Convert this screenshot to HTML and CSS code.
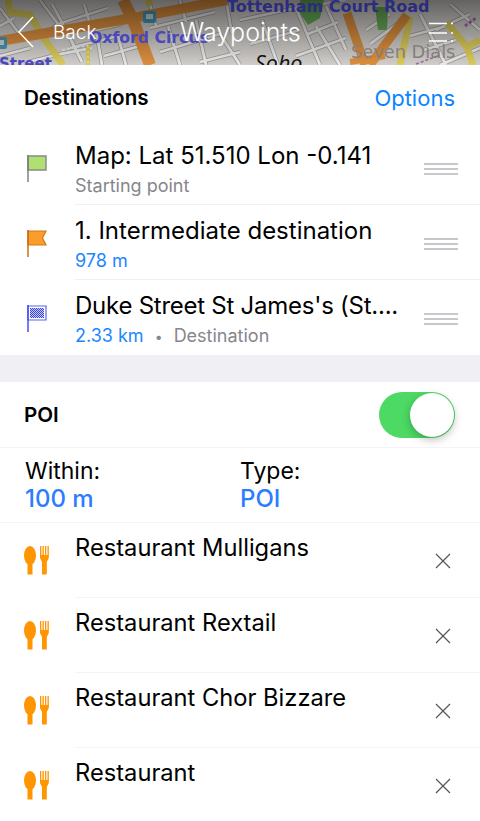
FILE: index.html
```html
<!DOCTYPE html>
<html lang="en">
<head>
    <meta charset="UTF-8">
    <meta name="viewport" content="width=device-width, initial-scale=1.0">
    <title>Waypoints</title>
    <link rel="stylesheet" href="styles.css">
</head>
<body>
    <header class="topbar">
        <svg class="map" viewBox="0 0 480 65" width="480" height="65">
            <defs>
                <linearGradient id="shade" x1="0" y1="0" x2="0" y2="1">
                    <stop offset="0" stop-color="#000" stop-opacity="0.56"/>
                    <stop offset="0.6" stop-color="#000" stop-opacity="0.28"/>
                    <stop offset="1" stop-color="#000" stop-opacity="0.08"/>
                </linearGradient>
                <g id="streets">
                    <path d="M0 8 L24 40 M0 26 L14 18 M40 0 L58 24 L44 36 M58 24 L108 8 M52 4 L66 30 L90 24 L84 4 M66 30 L82 62 M96 30 L122 24 M92 48 L60 54 L28 62 M96 30 L102 65"/>
                    <path d="M30 48 L0 56 M70 48 L118 36 L126 65 M104 56 L140 46 M150 28 L215 12 M160 52 L220 34 L240 65 M168 26 L180 65 M196 20 L206 65 M150 4 L156 26 M180 0 L186 22 M200 62 L240 52 M226 0 L232 34"/>
                    <path d="M240 20 L296 8 L320 65 M250 44 L300 30 M262 20 L278 65 M296 56 L346 38 M316 26 L340 65 M326 6 L346 50 M338 22 L308 34 M296 8 L346 0"/>
                    <path d="M370 44 L400 22 M366 30 L390 14 M420 14 L446 65 M410 36 L446 26 M436 30 L470 14 M450 4 L480 30 M424 50 L456 40 M440 65 L480 48"/>
                </g>
            </defs>
            <g class="map-base">
                <rect width="480" height="65" fill="#e2dfdb"/>
                <!-- small streets, casing first -->
                <use href="#streets" fill="none" stroke="#a9a5a1" stroke-width="4.200"/>
                <use href="#streets" fill="none" stroke="#fff" stroke-width="2.800"/>
                <!-- parks -->
                <path d="M300 0 H324 L320 18 L308 25 L300 13 Z" fill="#6fbb5e"/>
                <path d="M375 7 H388 L387 30 H378 Z" fill="#6fbb5e"/>
                <!-- main roads -->
                <g fill="none">
                    <path d="M8 0 L10 12 L30 15 L43 37 L63 65" stroke="#ecdc62" stroke-width="7"/>
                    <path d="M410 17 L400 65" stroke="#ecdc62" stroke-width="7"/>
                    <path d="M447 23 L467 47 L480 40 M467 47 L473 65" stroke="#ecdc62" stroke-width="7"/>
                    <path d="M148 0 L150 6" stroke="#ecdc62" stroke-width="7"/>
                    <path d="M88 44 V65" stroke="#ecdc62" stroke-width="4"/>
                    <path d="M88 46 V65" stroke="#fff" stroke-width="1" stroke-dasharray="2 3"/>
                    <path d="M62 50 L88 45" stroke="#fff" stroke-width="2" stroke-dasharray="3 2"/>
                    <path d="M0 41 L133 18 L227 0" stroke="#ee9a43" stroke-width="10"/>
                    <path d="M123 0 L133 20 L150 65" stroke="#ee9a43" stroke-width="12"/>
                    <path d="M347 13 L365 65" stroke="#ee9a43" stroke-width="9"/>
                    <path d="M407 15 L370 65" stroke="#ee9a43" stroke-width="9"/>
                    <path d="M350 62 L385 56" stroke="#ee9a43" stroke-width="6"/>
                    <path d="M465 26 L476 18" stroke="#b070b8" stroke-width="3" stroke-dasharray="3 2"/>
                    <path d="M416 64 L440 55" stroke="#b070b8" stroke-width="1.500" stroke-dasharray="3 2"/>
                </g>
                <rect x="143" y="11" width="13" height="12" rx="2" fill="#4aa3c4"/>
                <rect x="146" y="14" width="7" height="5" fill="#d8e8ee"/>
                <rect x="-6" y="37" width="13" height="12" rx="2" fill="#4aa3c4"/>
                <rect x="-3" y="40" width="7" height="5" fill="#d8e8ee"/>
                <rect width="480" height="65" fill="url(#shade)"/>
            </g>
            <text x="227" y="12" class="map-label road">Tottenham Court Road</text>
            <text x="89" y="43" class="map-label station">Oxford Circus</text>
            <text x="-1" y="69" class="map-label station street">Street</text>
            <text x="255" y="71" class="map-soho">Soho</text>
            <text x="351" y="58" class="map-dials">Seven Dials</text>
        </svg>
        <svg class="back-arrow" width="18" height="32" viewBox="0 0 18 32"><path d="M16 1 L2 16 L16 31" fill="none" stroke="#fff" stroke-width="1.4"/></svg>
        <span class="back-text">Back</span>
        <span class="title">Waypoints</span>
        <svg class="menu-icon" width="24" height="22" viewBox="0 0 24 22">
            <path d="M0 2.500 H18 M22 2.500 H24 M0 12 H18 M22 12 H24 M0 20 H18 M22 20 H24" stroke="#fff" stroke-width="1.400"/>
        </svg>
    </header>

    <div class="section-head">
        <span class="section-title">Destinations</span>
        <span class="options">Options</span>
    </div>

    <ul class="list">
        <li class="row">
            <svg class="flag" width="20" height="30" viewBox="0 0 20 30"><path d="M1 1 H19 V15 H1 Z" fill="#b0e070" stroke="#888" stroke-width="1.4"/><path d="M1 0 V27" stroke="#777" stroke-width="1.4"/></svg>
            <div class="row-text">
                <div class="row-name">Map: Lat 51.510 Lon -0.141</div>
                <div class="row-sub grey">Starting point</div>
            </div>
            <div class="grip"><i></i><i></i><i></i></div>
        </li>
        <li class="row">
            <svg class="flag" width="20" height="30" viewBox="0 0 20 30"><path d="M1 1 H19 L15.500 8 L19 15 H1 Z" fill="#fb9c2b" stroke="#d07a18" stroke-width="1.2"/><path d="M1 0 V27" stroke="#c06a10" stroke-width="1.4"/></svg>
            <div class="row-text">
                <div class="row-name">1. Intermediate destination</div>
                <div class="row-sub blue">978 m</div>
            </div>
            <div class="grip"><i></i><i></i><i></i></div>
        </li>
        <li class="row">
            <svg class="flag" width="20" height="30" viewBox="0 0 20 30">
                <defs><pattern id="check" width="2" height="2" patternUnits="userSpaceOnUse"><rect width="2" height="2" fill="#c5c9fb"/><rect width="1" height="1" fill="#3c44d8"/><rect x="1" y="1" width="1" height="1" fill="#3c44d8"/></pattern></defs>
                <path d="M1 1 H19 V15 H1 Z" fill="#fff" stroke="#5a64f0" stroke-width="1.2"/><rect x="3" y="3" width="14" height="10" fill="url(#check)"/><path d="M1 0 V27" stroke="#3a46f0" stroke-width="1.4"/>
            </svg>
            <div class="row-text">
                <div class="row-name name-tight">Duke Street St James's (St....</div>
                <div class="row-sub"><span class="blue">2.33 km</span><span class="dot">•</span><span class="grey">Destination</span></div>
            </div>
            <div class="grip"><i></i><i></i><i></i></div>
        </li>
    </ul>

    <div class="spacer"></div>

    <div class="poi-head">
        <span class="section-title">POI</span>
        <div class="switch"><div class="knob"></div></div>
    </div>

    <div class="filters">
        <div class="filter filter-within">
            <div class="filter-label">Within:</div>
            <div class="filter-value">100 m</div>
        </div>
        <div class="filter">
            <div class="filter-label">Type:</div>
            <div class="filter-value">POI</div>
        </div>
    </div>

    <ul class="list poi-list">
        <li class="poi"><svg class="food" width="26" height="30"><use href="#food-icon"/></svg><div class="poi-name">Restaurant Mulligans</div><svg class="close" width="16" height="16" viewBox="0 0 16 16"><path d="M1 1 L15 15 M15 1 L1 15" stroke="#555" stroke-width="1.2"/></svg></li>
        <li class="poi"><svg class="food" width="26" height="30"><use href="#food-icon"/></svg><div class="poi-name">Restaurant Rextail</div><svg class="close" width="16" height="16" viewBox="0 0 16 16"><path d="M1 1 L15 15 M15 1 L1 15" stroke="#555" stroke-width="1.2"/></svg></li>
        <li class="poi"><svg class="food" width="26" height="30"><use href="#food-icon"/></svg><div class="poi-name">Restaurant Chor Bizzare</div><svg class="close" width="16" height="16" viewBox="0 0 16 16"><path d="M1 1 L15 15 M15 1 L1 15" stroke="#555" stroke-width="1.2"/></svg></li>
        <li class="poi"><svg class="food" width="26" height="30"><use href="#food-icon"/></svg><div class="poi-name">Restaurant</div><svg class="close" width="16" height="16" viewBox="0 0 16 16"><path d="M1 1 L15 15 M15 1 L1 15" stroke="#555" stroke-width="1.2"/></svg></li>
    </ul>

    <svg class="sprites" width="0" height="0">
        <symbol id="food-icon" viewBox="0 0 26 30">
            <g fill="#ff9500">
                <ellipse cx="6" cy="9.500" rx="6" ry="9.500"/>
                <rect x="3.500" y="15" width="5" height="13.500"/>
                <rect x="16" y="0" width="1.300" height="10"/>
                <rect x="18.500" y="0" width="1.300" height="10"/>
                <rect x="21" y="0" width="1.300" height="10"/>
                <rect x="23.500" y="0" width="1.300" height="10"/>
                <path d="M16 9 H24.800 V12 L22.800 16 V28.500 H18 V16 L16 12 Z"/>
            </g>
        </symbol>
    </svg>
</body>
</html>
```

FILE: styles.css
```css
body {
    margin: 0;
    background-color: #fff;
    font-family: Inter, "Liberation Sans", sans-serif;
    color: #000;
    width: 480px;
    height: 821px;
    overflow: hidden;
}
ul {
    list-style: none;
    margin: 0;
    padding: 0;
}

/* top bar over the map */
.topbar {
    position: relative;
    height: 65px;
    overflow: hidden;
    color: #fff;
}
.map {
    position: absolute;
    left: 0;
    top: 0;
    display: block;
}
.map-base {
    filter: blur(0.6px);
}
.map-label {
    font-family: "DejaVu Sans", sans-serif;
    font-weight: bold;
}
.road {
    font-size: 16px;
    fill: #2b2b80;
}
.station {
    font-size: 15.700px;
    fill: #4a48bd;
}
.street {
    font-size: 15px;
}
.map-soho {
    font-family: "Open Sans", sans-serif;
    font-style: italic;
    font-size: 21.500px;
    fill: #111;
}
.map-dials {
    font-family: "DejaVu Sans", sans-serif;
    font-size: 17.800px;
    fill: #847f7c;
}
.back-arrow {
    position: absolute;
    left: 17px;
    top: 16px;
}
.back-text {
    position: absolute;
    left: 53px;
    top: 21px;
    font-size: 19px;
    font-weight: 300;
}
.title {
    position: absolute;
    left: 180px;
    top: 17px;
    font-size: 25px;
    font-weight: 300;
}
.menu-icon {
    position: absolute;
    left: 429px;
    top: 21px;
}

/* destinations */
.section-head {
    height: 65px;
    display: flex;
    justify-content: space-between;
    align-items: center;
    padding: 0 25px 0 24px;
}
.section-title {
    font-size: 20.600px;
    font-weight: 600;
}
.options {
    font-size: 22px;
    margin-top: 1px;
    color: #0a84ff;
}
.row {
    height: 75px;
    display: flex;
    align-items: flex-start;
    padding-left: 27px;
    box-sizing: border-box;
}
.flag {
    margin-top: 25px;
    flex: none;
}
.row-text {
    flex: 1;
    margin-left: 28px;
    padding-top: 11px;
    height: 100%;
    box-sizing: border-box;
    border-bottom: 1px solid #f0f0f3;
}
.row:last-child .row-text {
    border-bottom: none;
}
.row-name {
    font-size: 24px;
    line-height: 30px;
}
.name-tight {
    letter-spacing: -0.25px;
}
.row-sub {
    font-size: 18px;
    line-height: 24px;
    margin-top: 3px;
}
.blue {
    color: #1c86ff;
}
.grey {
    color: #86868b;
}
.dot {
    color: #86868b;
    display: inline-block;
    width: 30px;
    text-align: center;
    font-size: 14px;
}
.grip {
    position: absolute;
    left: 424px;
    margin-top: 33px;
    width: 34px;
    display: flex;
    flex-direction: column;
    gap: 3px;
}
.grip i {
    display: block;
    height: 2px;
    background-color: #c8c7cc;
}
.spacer {
    height: 27px;
    background-color: #efeff4;
}

/* poi */
.poi-head {
    height: 66px;
    display: flex;
    justify-content: space-between;
    align-items: center;
    padding: 0 25px 0 24px;
    box-sizing: border-box;
    border-bottom: 1px solid #f4f4f6;
}
.switch {
    width: 76px;
    height: 46px;
    border-radius: 23px;
    background-color: #4cd964;
    position: relative;
}
.knob {
    position: absolute;
    right: 1px;
    top: 1px;
    width: 44px;
    height: 44px;
    border-radius: 50%;
    background-color: #fff;
    box-shadow: 0 3px 8px rgba(0, 0, 0, 0.25);
}
.filters {
    height: 75px;
    display: flex;
    padding: 9px 25px 0;
    box-sizing: border-box;
    border-bottom: 1px solid #f4f4f6;
}
.filter-within {
    width: 215px;
}
.filter-label {
    font-size: 23px;
    line-height: 28px;
}
.filter-value {
    font-size: 24px;
    line-height: 28px;
    font-weight: 500;
    color: #2b7cff;
}
.poi {
    height: 75px;
    display: flex;
    align-items: flex-start;
    padding-left: 24px;
    position: relative;
}
.food {
    margin-top: 23px;
    flex: none;
}
.poi-name {
    flex: 1;
    margin-left: 25px;
    padding-top: 10px;
    font-size: 23.700px;
    line-height: 30px;
    height: 100%;
    box-sizing: border-box;
    border-bottom: 1px solid #f4f4f6;
}
.close {
    position: absolute;
    left: 435px;
    top: 30px;
}
.sprites {
    position: absolute;
}
```
